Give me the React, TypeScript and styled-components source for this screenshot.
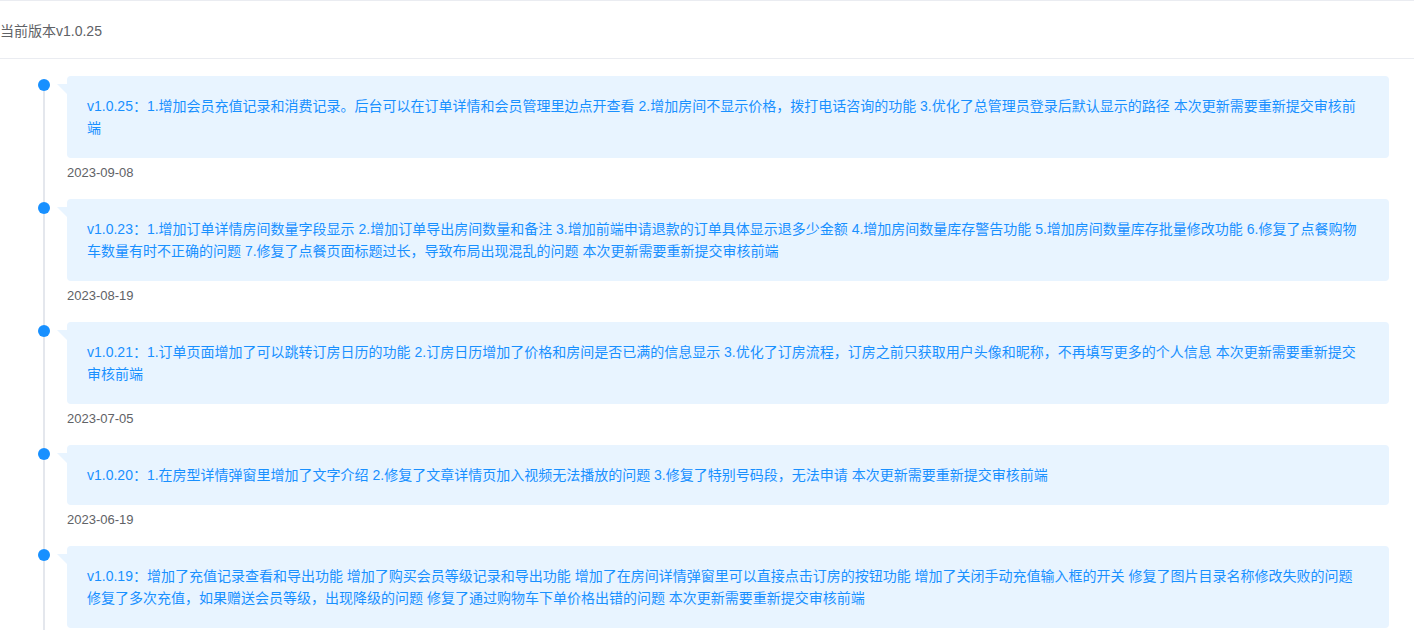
import React from 'react';
import styled, { createGlobalStyle } from 'styled-components';

const GlobalStyle = createGlobalStyle`
  html, body {
    margin: 0;
    padding: 0;
    background: #fff;
  }
  body {
    font-family: "Liberation Sans", "Noto Sans CJK SC", sans-serif;
  }
`;

const logs = [
  {
    version: 'v1.0.25',
    text: '1.增加会员充值记录和消费记录。后台可以在订单详情和会员管理里边点开查看 2.增加房间不显示价格，拨打电话咨询的功能 3.优化了总管理员登录后默认显示的路径 本次更新需要重新提交审核前端',
    date: '2023-09-08',
  },
  {
    version: 'v1.0.23',
    text: '1.增加订单详情房间数量字段显示 2.增加订单导出房间数量和备注 3.增加前端申请退款的订单具体显示退多少金额 4.增加房间数量库存警告功能 5.增加房间数量库存批量修改功能 6.修复了点餐购物车数量有时不正确的问题 7.修复了点餐页面标题过长，导致布局出现混乱的问题 本次更新需要重新提交审核前端',
    date: '2023-08-19',
  },
  {
    version: 'v1.0.21',
    text: '1.订单页面增加了可以跳转订房日历的功能 2.订房日历增加了价格和房间是否已满的信息显示 3.优化了订房流程，订房之前只获取用户头像和昵称，不再填写更多的个人信息 本次更新需要重新提交审核前端',
    date: '2023-07-05',
  },
  {
    version: 'v1.0.20',
    text: '1.在房型详情弹窗里增加了文字介绍 2.修复了文章详情页加入视频无法播放的问题 3.修复了特别号码段，无法申请 本次更新需要重新提交审核前端',
    date: '2023-06-19',
  },
  {
    version: 'v1.0.19',
    text: '增加了充值记录查看和导出功能 增加了购买会员等级记录和导出功能 增加了在房间详情弹窗里可以直接点击订房的按钮功能 增加了关闭手动充值输入框的开关 修复了图片目录名称修改失败的问题 修复了多次充值，如果赠送会员等级，出现降级的问题 修复了通过购物车下单价格出错的问题 本次更新需要重新提交审核前端',
    date: '2023-05-26',
  },
];

const App = () => {
  return (
    <Page>
      <GlobalStyle />
      <Header>当前版本v1.0.25</Header>
      <Timeline>
        {logs.map((log, i) => (
          <Item key={log.version}>
            <Rail>
              <RailTop $hidden={i === 0} />
              <Dot />
              <RailLine />
            </Rail>
            <Body>
              <Card>
                {log.version}：{log.text}
              </Card>
              <Stamp>{log.date}</Stamp>
            </Body>
          </Item>
        ))}
      </Timeline>
    </Page>
  );
};

export default App;

const Page = styled.div`
  width: 100%;
  min-height: 630px;
  background: #fff;
`;

const Header = styled.div`
  height: 57px;
  display: flex;
  align-items: center;
  border-top: 1px solid #eaecf1;
  border-bottom: 1px solid #eaecf1;
  font-size: 14px;
  color: #606266;
`;

const Timeline = styled.ul`
  list-style: none;
  margin: 0;
  padding: 17px 25px 0 38px;
`;

const Item = styled.li`
  display: grid;
  grid-template-columns: 12px 1fr;
  column-gap: 17px;
`;

const Rail = styled.div`
  display: flex;
  flex-direction: column;
  align-items: center;
`;

const RailTop = styled.div<{ $hidden?: boolean }>`
  width: 2px;
  height: 3px;
  background: ${({ $hidden }) => ($hidden ? 'transparent' : '#e4e7ed')};
`;

const Dot = styled.div`
  width: 12px;
  height: 12px;
  border-radius: 50%;
  background: #1890ff;
  flex-shrink: 0;
`;

const RailLine = styled.div`
  width: 2px;
  flex: 1;
  background: #e4e7ed;
`;

const Body = styled.div`
  padding-bottom: 20px;
  min-width: 0;
`;

const Card = styled.div`
  position: relative;
  background: #e8f4ff;
  border-radius: 4px;
  padding: 19px 20px;
  font-size: 14px;
  line-height: 22px;
  color: #1890ff;

  &::before {
    content: '';
    position: absolute;
    left: -10px;
    top: 8px;
    width: 0;
    height: 0;
    border-top: 10px solid #e8f4ff;
    border-left: 10px solid transparent;
  }
`;

const Stamp = styled.div`
  margin-top: 8px;
  font-size: 13px;
  line-height: 1;
  color: #606266;
`;
